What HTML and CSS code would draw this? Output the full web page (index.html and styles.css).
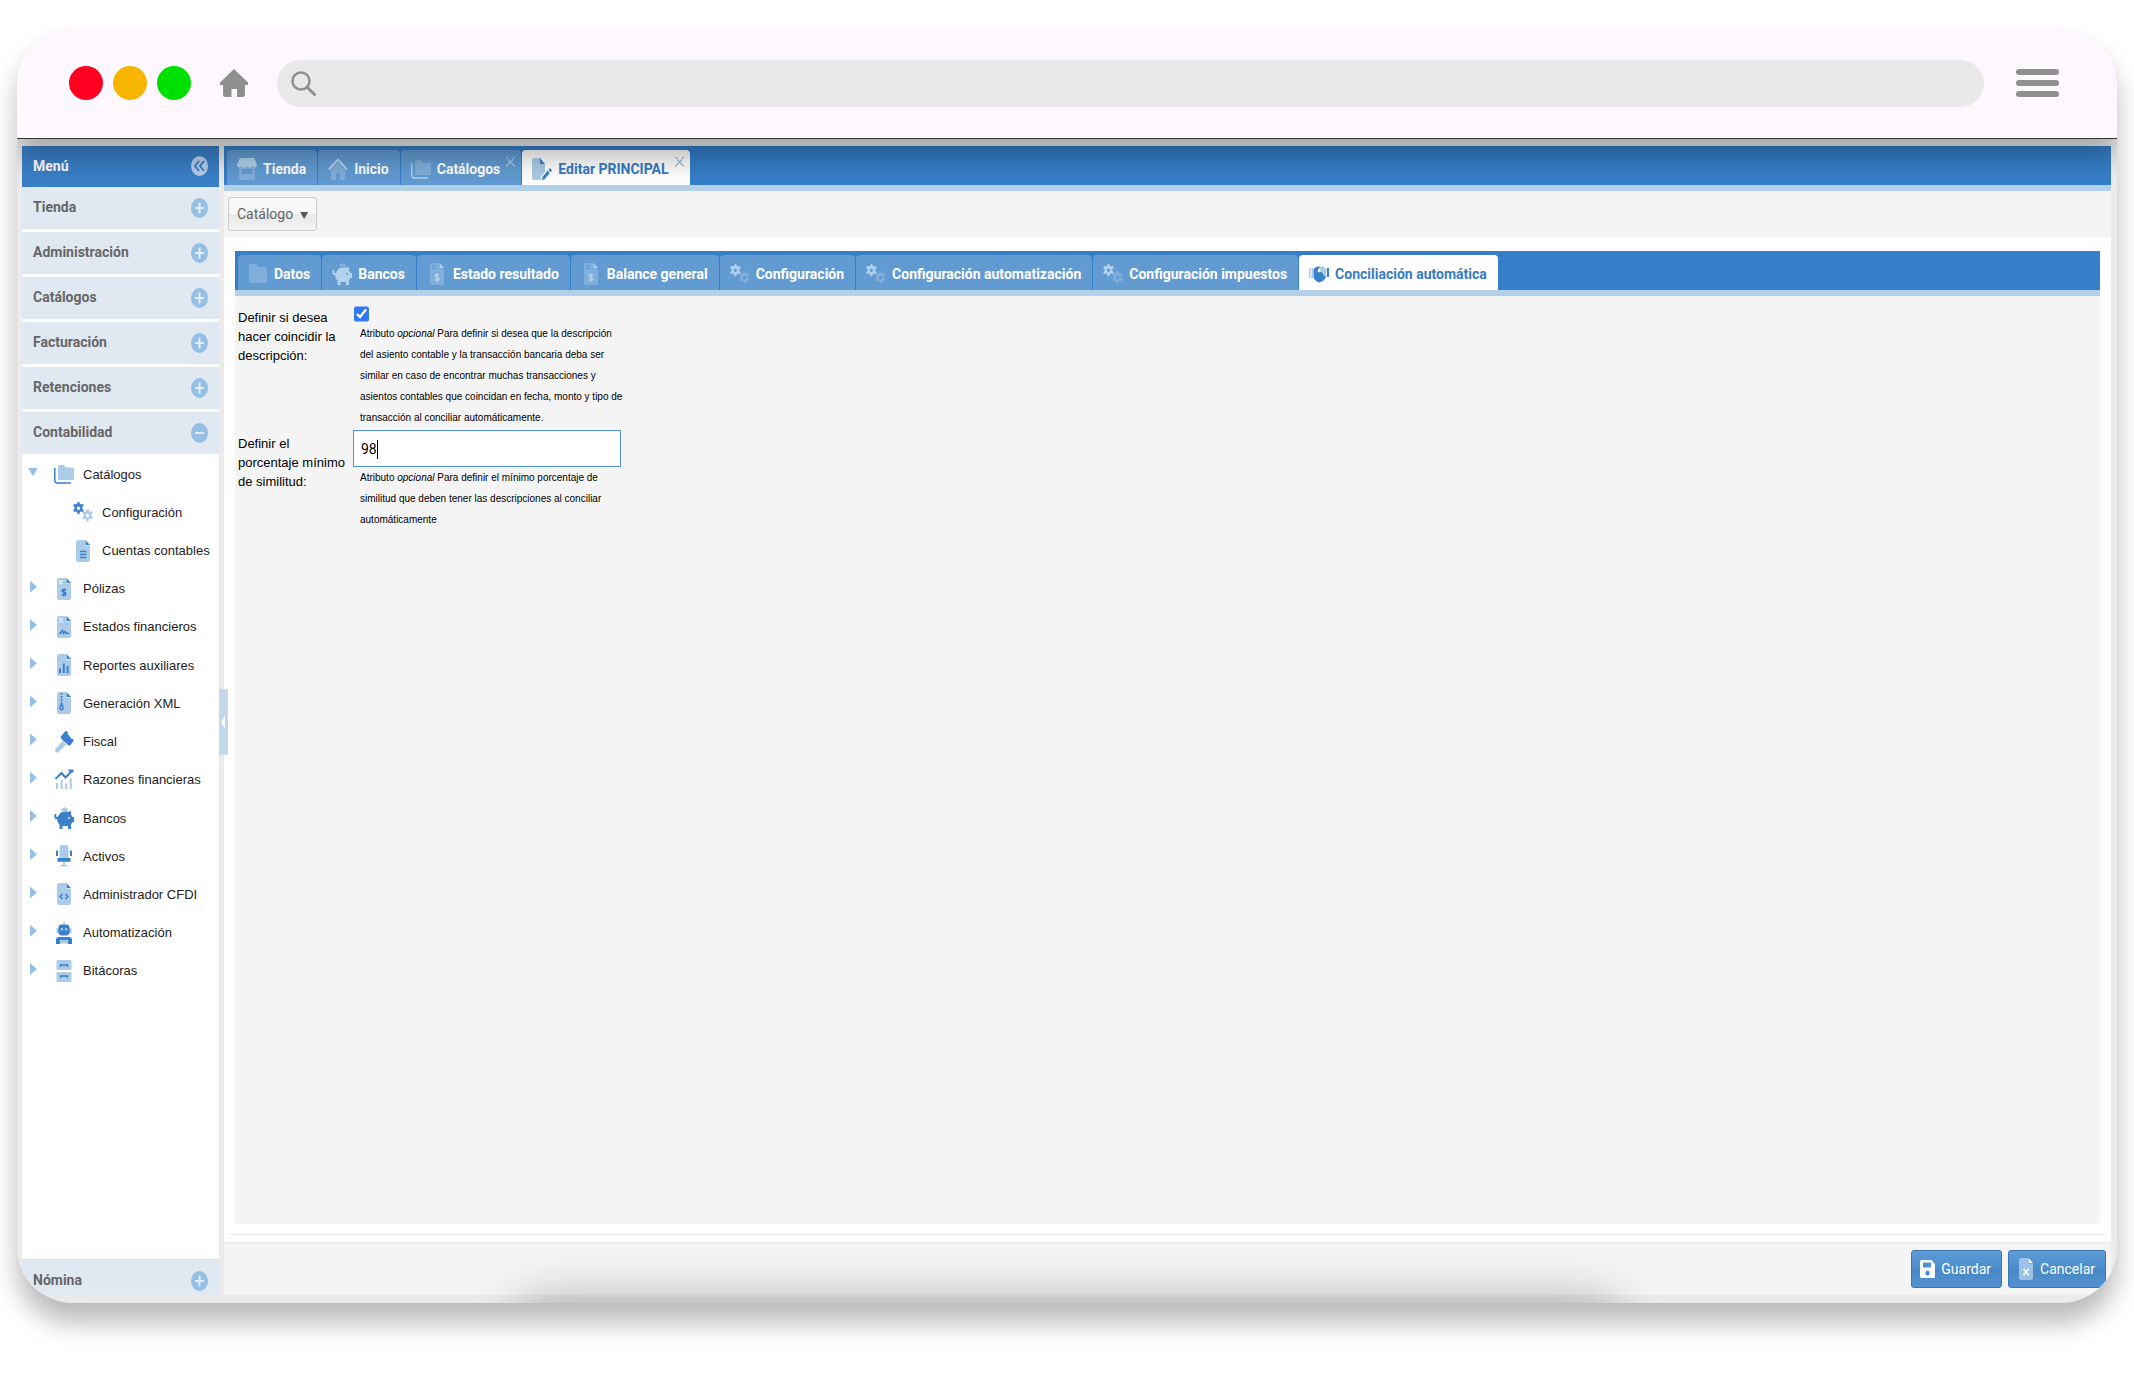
FILE: index.html
```html
<!DOCTYPE html>
<html lang="es">
<head>
<meta charset="utf-8">
<title>Editar PRINCIPAL</title>
<link rel="stylesheet" href="styles.css">
</head>
<body>
<svg class="sprite" aria-hidden="true">
  <symbol id="plus" viewBox="0 0 17 20"><ellipse class="b" cx="8.500" cy="10" rx="8.500" ry="10"/><path class="ln" d="M8.500 4.500v11M4 10h9"/></symbol>
  <symbol id="minus" viewBox="0 0 17 20"><ellipse class="b" cx="8.500" cy="10" rx="8.500" ry="10"/><path class="ln" d="M4 10h9"/></symbol>
  <symbol id="collapse" viewBox="0 0 17 20"><ellipse class="b" cx="8.500" cy="10" rx="8.500" ry="10"/><path class="ln" d="M8 5l-4 5 4 5M13 5l-4 5 4 5"/></symbol>
  <symbol id="folder" viewBox="0 0 20 22"><path class="b" d="M1 3a2 2 0 0 1 2-2h5l2 3h7a2 2 0 0 1 2 2v12a2 2 0 0 1-2 2H3a2 2 0 0 1-2-2z"/></symbol>
  <symbol id="folders" viewBox="0 0 20 22"><path class="b" d="M4 3.500A1.500 1.500 0 0 1 5.500 2H10l2 2.500h6.500A1.500 1.500 0 0 1 20 6v9.500a1.500 1.500 0 0 1-1.500 1.500h-13A1.500 1.500 0 0 1 4 15.500z"/><path class="al" d="M.8 5v12.500A2.500 2.500 0 0 0 3.500 20H17"/></symbol>
  <symbol id="cogs" viewBox="0 0 22 22"><path class="a" fill-rule="evenodd" d="M5 0h2l.5 2 1.300.7L10.800 2l1 2-1.500 1.500v2L11.800 9l-1 2-2-.6-1.300.7L7 13.500H5l-.5-2.400-1.300-.7-2 .6-1-2 1.500-1.500v-2L.2 4l1-2 2 .7L4.500 2zM6 5a1.800 2 0 1 0 0 4 1.800 2 0 0 0 0-4z"/><path class="b" fill-rule="evenodd" d="M15 8h2l.5 2 1.300.7 2-.7 1 2-1.500 1.500v2l1.500 1.500-1 2-2-.6-1.300.7-.5 2.400h-2l-.5-2.400-1.300-.7-2 .6-1-2 1.500-1.500v-2L10.200 12l1-2 2 .7 1.300-.7zm1 5a1.800 2 0 1 0 0 4 1.800 2 0 0 0 0-4z"/></symbol>
  <symbol id="sheet" viewBox="0 0 20 22"><path class="b" d="M5 0h7v5.500h5V20a2 2 0 0 1-2 2H5a2 2 0 0 1-2-2V2a2 2 0 0 1 2-2z"/><path class="a" d="M12.500 0l4.500 5h-4.500z"/></symbol>
  <symbol id="doc" viewBox="0 0 20 22"><use href="#sheet"/><path class="at" d="M7 11.500h6.500M7 14.500h6.500M7 17.500h6.500"/></symbol>
  <symbol id="doc-money" viewBox="0 0 20 22"><use href="#sheet"/><path class="ht" d="M5 3h4M5 5.500h4"/><path class="at" d="M12 12.200c-1-1-4-1-4 .6 0 1.800 4 1.200 4 3 0 1.700-3 1.700-4.200.6M10 10.500v8"/></symbol>
  <symbol id="doc-sign" viewBox="0 0 20 22"><use href="#sheet"/><path class="ht" d="M5 3h4M5 5.500h4"/><path class="at" d="M5.500 18l3-3.500 1 3 1.500-2 1 1.800h3"/></symbol>
  <symbol id="doc-bars" viewBox="0 0 20 22"><use href="#sheet"/><path class="am" d="M6 19v-4.500M9.800 19V9.500M13.600 19v-7"/></symbol>
  <symbol id="doc-zip" viewBox="0 0 20 22"><use href="#sheet"/><path class="at dash" d="M7.500 1v9"/><path class="at" d="M7.500 11l-1.500 4.500a1.600 1.600 0 1 0 3 0z"/></symbol>
  <symbol id="doc-code" viewBox="0 0 20 22"><use href="#sheet"/><path class="at" d="M8.500 11l-2.300 2.500 2.300 2.500M11.500 11l2.300 2.500-2.300 2.500"/></symbol>
  <symbol id="doc-x" viewBox="0 0 20 22"><use href="#sheet"/><path class="at" d="M7.500 11l5 6M12.500 11l-5 6"/></symbol>
  <symbol id="gavel" viewBox="0 0 20 22"><path class="b" d="M9 9.500l3 4L4.500 21.300c-1.500 1.500-4.600-1.300-3-3.300z"/><path class="a" d="M11.500 0l2.300.8-.3 1.700 4 5.500 1.800-.3.200 2.300-3.800 5-1.500-1L7.500 8 6.500 6z"/></symbol>
  <symbol id="trend" viewBox="0 0 20 22"><path class="am" d="M1.500 10L7.500 4l4 4.500L18 2M14.500 1.500h4v2"/><path class="bm" d="M3 20v-6M7.600 20V11M12.200 20v-5.500M16.800 20V9.500"/></symbol>
  <symbol id="pig" viewBox="0 0 20 22"><path class="b" d="M7 4c0-5 7-5 7 0z"/><path class="a" d="M5.500 7C7.500 4.500 11 4 14 5l3-1v3.500l1.500 2.500H20v5h-1.500L17 17.500V22h-3v-3H8.500v3h-3v-4.500C3.500 15.500 3 14 3.300 12 1 12.500-.5 9.500.5 7.500c1-1 2.500 0 1.800 1C1.500 9.500 3 10.800 4 9.500z"/><circle class="dot" cx="15" cy="11" r="1"/></symbol>
  <symbol id="chair" viewBox="0 0 20 22"><path class="b" d="M5.500 13V3a3 3 0 0 1 3-3h3a3 3 0 0 1 3 3v10zM9 16.500h2V20h2.500v1.500h-7V20H9z"/><path class="a" d="M2 5.500h2V11H2zM16 5.500h2V11h-2zM3.500 13h13v3.800h-13z"/></symbol>
  <symbol id="robot" viewBox="0 0 20 22"><path class="b" d="M9.300 0h1.500v3H9.300zM2.500 6h15v5h-15zM6 18h8v3.500H6z"/><path class="a" fill-rule="evenodd" d="M4.500 5.500a3 3 0 0 1 3-3h5a3 3 0 0 1 3 3V10a3.500 3.500 0 0 1-3.500 3.500H8A3.500 3.500 0 0 1 4.500 10zM7 6v2.500h2V6zm4 0v2.500h2V6zM2 22v-4a3 3 0 0 1 3-3h10a3 3 0 0 1 3 3v4h-4v-4H6v4z"/></symbol>
  <symbol id="cabinet" viewBox="0 0 20 22"><path class="b" d="M4 0h12a1.500 1.500 0 0 1 1.500 1.500V10h-15V1.500A1.500 1.500 0 0 1 4 0zM2.500 12h15v8.500A1.500 1.500 0 0 1 16 22H4a1.500 1.500 0 0 1-1.500-1.500z"/><path class="at" d="M6.500 7V5h7v2M6.500 18v-2h7v2"/></symbol>
  <symbol id="store" viewBox="0 0 20 22"><path class="b" d="M2 9h16v11a2 2 0 0 1-2 2H4a2 2 0 0 1-2-2zM5 11v5h10v-5z" fill-rule="evenodd"/><path class="a" d="M3 0h14l3 6.500C20 10 16.500 10 15.500 8c-1 2-4.500 2-5.500 0-1 2-4.500 2-5.500 0-1 2-4.500 2-4.500-1.500z"/></symbol>
  <symbol id="house" viewBox="0 0 20 22"><path class="b" d="M3 12l7-8 7 8v8a2 2 0 0 1-2 2h-3v-7H8v7H5a2 2 0 0 1-2-2z"/><path class="am" d="M1 11.500L10 1.500l9 10"/></symbol>
  <symbol id="edit" viewBox="0 0 20 22"><path class="b" d="M2 0h7v6h4v8l-4 5v3H2a2 2 0 0 1-2-2V2a2 2 0 0 1 2-2z"/><path class="a" d="M8 0l5 6H8zM18 10l2 2.500-1.500 1.700-2-2.500zM15.700 12.500l2 2.500-5.200 6.500-2.500.5.500-3z"/></symbol>
  <symbol id="hands" viewBox="0 0 20 22"><path class="b" d="M0 5h1.500v10H0zM2.500 5H4v10H2.500zM10 3.500h4L17 6v8l-5-5z"/><path class="a" d="M4.500 6L8 3.500h3L8.500 8l1 1.500 2.500-1 5 6-3 3.500-3.500 1.500-3-1-3-3.500zM17.800 5H20v9h-2.200z"/></symbol>
  <symbol id="save" viewBox="0 0 15 18"><path class="w" fill-rule="evenodd" d="M1.500 0h10L15 4v12.500a1.500 1.500 0 0 1-1.500 1.500h-12A1.500 1.500 0 0 1 0 16.500v-15A1.500 1.500 0 0 1 1.500 0zM3 2.500v5h8v-5zM7.500 10.500a2.200 2.500 0 1 0 0 5 2.200 2.500 0 0 0 0-5z"/></symbol>
</svg>

<div class="window">
  <header class="chrome">
    <span class="lights"><i class="light red"></i><i class="light amber"></i><i class="light green"></i></span>
    <a class="home" href="#" aria-label="Página de inicio"><svg viewBox="0 0 28 28"><path fill="#8f8f8f" d="M14 0L28 13.500V16h-3v10a2 2 0 0 1-2 2h-6v-8h-5.500v8H5a2 2 0 0 1-2-2V16H0v-2.500z"/></svg></a>
    <label class="search">
      <svg viewBox="0 0 25 25"><circle cx="10" cy="10" r="8.500" fill="none" stroke="#8f8f8f" stroke-width="2.500"/><path d="M16 16l7.500 7.500" stroke="#8f8f8f" stroke-width="3" stroke-linecap="round"/></svg>
      <input type="text" aria-label="Dirección">
    </label>
    <button class="burger" aria-label="Opciones"><i></i><i></i><i></i></button>
  </header>

  <div class="app">
    <nav class="side">
      <button class="side-head top">Menú<svg><use href="#collapse"/></svg></button>
      <button class="side-head">Tienda<svg><use href="#plus"/></svg></button>
      <button class="side-head">Administración<svg><use href="#plus"/></svg></button>
      <button class="side-head">Catálogos<svg><use href="#plus"/></svg></button>
      <button class="side-head">Facturación<svg><use href="#plus"/></svg></button>
      <button class="side-head">Retenciones<svg><use href="#plus"/></svg></button>
      <button class="side-head open">Contabilidad<svg><use href="#minus"/></svg></button>
      <ul class="tree">
        <li><i class="arrow down"></i><a href="#"><svg><use href="#folders"/></svg>Catálogos</a></li>
        <li class="child"><a href="#"><svg><use href="#cogs"/></svg>Configuración</a></li>
        <li class="child"><a href="#"><svg><use href="#doc"/></svg>Cuentas contables</a></li>
        <li><i class="arrow"></i><a href="#"><svg><use href="#doc-money"/></svg>Pólizas</a></li>
        <li><i class="arrow"></i><a href="#"><svg><use href="#doc-sign"/></svg>Estados financieros</a></li>
        <li><i class="arrow"></i><a href="#"><svg><use href="#doc-bars"/></svg>Reportes auxiliares</a></li>
        <li><i class="arrow"></i><a href="#"><svg><use href="#doc-zip"/></svg>Generación XML</a></li>
        <li><i class="arrow"></i><a href="#"><svg><use href="#gavel"/></svg>Fiscal</a></li>
        <li><i class="arrow"></i><a href="#"><svg><use href="#trend"/></svg>Razones financieras</a></li>
        <li><i class="arrow"></i><a href="#"><svg><use href="#pig"/></svg>Bancos</a></li>
        <li><i class="arrow"></i><a href="#"><svg><use href="#chair"/></svg>Activos</a></li>
        <li><i class="arrow"></i><a href="#"><svg><use href="#doc-code"/></svg>Administrador CFDI</a></li>
        <li><i class="arrow"></i><a href="#"><svg><use href="#robot"/></svg>Automatización</a></li>
        <li><i class="arrow"></i><a href="#"><svg><use href="#cabinet"/></svg>Bitácoras</a></li>
      </ul>
      <button class="side-head last">Nómina<svg><use href="#plus"/></svg></button>
      <button class="splitter" aria-label="Contraer menú"></button>
    </nav>

    <main class="main">
      <div class="tabs">
        <button class="tab"><svg><use href="#store"/></svg>Tienda</button>
        <button class="tab"><svg><use href="#house"/></svg>Inicio</button>
        <button class="tab"><svg><use href="#folders"/></svg>Catálogos<i class="close"></i></button>
        <button class="tab active"><svg><use href="#edit"/></svg>Editar PRINCIPAL<i class="close"></i></button>
      </div>
      <div class="toolbar"><button class="menu">Catálogo<i></i></button></div>
      <section class="content">
        <div class="tabs">
          <button class="tab"><svg><use href="#folder"/></svg>Datos</button>
          <button class="tab"><svg><use href="#pig"/></svg>Bancos</button>
          <button class="tab"><svg><use href="#doc-money"/></svg>Estado resultado</button>
          <button class="tab"><svg><use href="#doc-money"/></svg>Balance general</button>
          <button class="tab"><svg><use href="#cogs"/></svg>Configuración</button>
          <button class="tab"><svg><use href="#cogs"/></svg>Configuración automatización</button>
          <button class="tab"><svg><use href="#cogs"/></svg>Configuración impuestos</button>
          <button class="tab active"><svg><use href="#hands"/></svg>Conciliación automática</button>
        </div>
        <form class="panel">
          <label for="match">Definir si desea hacer coincidir la descripción:</label>
          <div class="field">
            <input type="checkbox" id="match" checked>
            <p>Atributo <em>opcional</em> Para definir si desea que la descripción<br>del asiento contable y la transacción bancaria deba ser<br>similar en caso de encontrar muchas transacciones y<br>asientos contables que coincidan en fecha, monto y tipo de<br>transacción al conciliar automáticamente.</p>
          </div>
          <label for="percent">Definir el porcentaje mínimo de similitud:</label>
          <div class="field">
            <input type="text" id="percent" value="98">
            <p>Atributo <em>opcional</em> Para definir el mínimo porcentaje de<br>similitud que deben tener las descripciones al conciliar<br>automáticamente</p>
          </div>
        </form>
        <hr>
      </section>
      <footer class="actions">
        <button class="btn"><svg class="disk"><use href="#save"/></svg>Guardar</button>
        <button class="btn"><svg><use href="#doc-x"/></svg>Cancelar</button>
      </footer>
    </main>
  </div>
</div>
</body>
</html>
```
FILE: styles.css
```css
* { box-sizing: border-box; }
body {
  margin: 0;
  padding: 28px 17px 72px;
  background: #fff;
  font: 14px/19px Roboto, "Liberation Sans", sans-serif;
  color: #222;
}
button, input { font: inherit; margin: 0; }
button { border: 0; padding: 0; background: none; }
a { color: inherit; text-decoration: none; }
svg { flex: none; width: 20px; height: 22px; --a: #3a80cb; --b: #accbe8; --h: #e4eef8; }
.sprite { position: absolute; width: 0; height: 0; }
.a { fill: var(--a); }
.b { fill: var(--b); }
.w { fill: #fff; }
.dot { fill: var(--h); }
.al, .at, .am, .bm, .ht, .ln { fill: none; stroke: var(--a); }
.al, .at, .ht { stroke-width: 1.5; }
.am, .bm, .ln { stroke-width: 2; }
.bm { stroke: var(--b); }
.ht, .ln { stroke: var(--h); }
.dash { stroke-dasharray: 2 1; }

.window {
  display: flex;
  flex-direction: column;
  min-height: calc(100vh - 100px);
  border-radius: 56px;
  overflow: hidden;
  background: #ebebeb;
  box-shadow: 0 20px 26px rgba(0, 0, 0, .27);
}
.chrome {
  position: relative;
  z-index: 2;
  display: flex;
  align-items: center;
  height: 111px;
  padding: 0 58px 0 52px;
  background: #fdf7ff;
  border-bottom: 1px solid #333;
  box-shadow: 0 20px 26px rgba(0, 0, 0, .27);
}
.lights { display: flex; gap: 10px; }
.light { width: 34px; height: 34px; border-radius: 50%; }
.red { background: #ff0020; }
.amber { background: #f8b500; }
.green { background: #00e000; }
.home { display: flex; margin: 0 29px; }
.home svg { width: 28px; height: 28px; }
.search {
  flex: 1;
  display: flex;
  align-items: center;
  gap: 12px;
  height: 47px;
  padding: 0 14px;
  border-radius: 24px;
  background: #e9e9e9;
}
.search svg { width: 25px; height: 25px; }
.search input { flex: 1; border: 0; background: none; outline: 0; }
.burger { display: flex; flex-direction: column; gap: 5px; width: 43px; margin-left: 32px; }
.burger i { height: 6px; border-radius: 3px; background: #8f8f8f; }

.app { flex: 1; display: flex; gap: 5px; padding: 7px 6px 8px 5px; position: relative; }
.app::after {
  content: "";
  position: absolute;
  left: 24%;
  right: 24%;
  bottom: -60px;
  height: 60px;
  box-shadow: 0 0 50px rgba(0, 0, 0, .32);
}
.side { position: relative; width: 197px; display: flex; flex-direction: column; background: #fff; }
.side-head {
  flex: none;
  display: flex;
  align-items: center;
  justify-content: space-between;
  height: 45px;
  padding: 0 11px 1px;
  border-bottom: 3px solid #fff;
  background: #e0e9f2;
  color: #666;
  font-weight: bold;
}
.side-head svg { width: 17px; height: 20px; --b: #95bfe4; }
.side-head.top { height: 41px; border: 0; background: #3a7fc8; color: #fff; }
.side-head.top svg { --b: #b5d0ea; --h: #3a7fc8; }
.side-head.open { height: 42px; border: 0; }
.side-head.last { height: 36px; border: 0; border-top: 1px solid #ddd; margin-top: auto; padding: 6px 11px 0; }
.tree {
  display: grid;
  grid-template-rows: repeat(14, 1fr);
  height: 535px;
  margin: 1px 0 0;
  padding: 0;
  list-style: none;
}
.tree, .panel > label { font: 13px/19px "Liberation Sans", sans-serif; }
.tree li { display: flex; align-items: center; padding-left: 8px; }
.tree a { display: flex; align-items: center; gap: 9px; white-space: nowrap; }
.tree .child { padding-left: 51px; }
.arrow {
  width: 7px;
  height: 12px;
  margin: 0 17px 4px 0;
  background: #95bfe4;
  clip-path: polygon(0 0, 100% 50%, 0 100%);
}
.arrow.down { width: 10px; height: 9px; margin: 0 16px 4px -2px; clip-path: polygon(0 0, 100% 0, 50% 100%); }
.splitter { position: absolute; right: -9px; top: 543px; width: 9px; height: 66px; background: #c2d8eb; z-index: 1; }
.splitter::after {
  content: "";
  position: absolute;
  left: 2px;
  top: 27px;
  width: 4px;
  height: 12px;
  background: #fff;
  clip-path: polygon(100% 0, 100% 100%, 0 50%);
}

.main { flex: 1; display: flex; flex-direction: column; background: #fff; }
.tabs {
  display: flex;
  gap: 1px;
  height: 45px;
  padding: 4px 3px 0;
  background: #357ec9;
  border-bottom: 6px solid #b3d0ea;
}
.tab {
  display: flex;
  align-items: center;
  gap: 6px;
  padding: 3px 11px 0 10px;
  border-radius: 4px 4px 0 0;
  background: #619bd2;
  color: #fff;
  font-weight: bold;
  white-space: nowrap;
}
.tab svg { --a: #b3d1ec; --b: #80afdc; --h: #619bd2; }
.tab.active { background: #fff; color: #357bc4; }
.tab.active svg { --a: #3a80cb; --b: #accbe8; }
.close {
  align-self: flex-start;
  width: 9px;
  height: 10px;
  margin: 4px -5px 0 0;
  background:
    linear-gradient(48deg, transparent 46%, #a3c4e2 46% 56%, transparent 56%),
    linear-gradient(-48deg, transparent 46%, #a3c4e2 46% 56%, transparent 56%);
}
.toolbar { height: 46px; padding: 6px 4px; background: #f4f4f4; }
.menu {
  display: flex;
  align-items: center;
  gap: 7px;
  height: 34px;
  padding: 0 8px;
  border: 1px solid #ccc;
  border-radius: 3px;
  background: linear-gradient(#f8f8f8 50%, #e9e9e9 50%, #f2f2f2);
  color: #666;
}
.menu i { width: 8px; height: 7px; margin-top: 3px; background: #555; clip-path: polygon(0 0, 100% 0, 50% 100%); }
.content { flex: 1; display: flex; flex-direction: column; padding: 14px 11px 7px; }
.panel {
  flex: 1;
  display: grid;
  grid-template-columns: 115px 268px;
  grid-template-rows: 126px auto;
  align-content: start;
  padding: 8px 3px;
  border-radius: 4px;
  background: #f4f4f4;
  color: #000;
}
.panel > label { padding: 4px 4px 0 0; }
.panel p {
  margin: 0;
  padding-left: 7px;
  font: 10px/21px "Liberation Sans", sans-serif;
  white-space: nowrap;
}
.panel input[type="checkbox"] { display: block; width: 15px; height: 18px; margin: 1px 0 0 1px; accent-color: #2f78f6; }
.panel input[type="text"] {
  display: block;
  width: 100%;
  height: 37px;
  border: 1px solid #4f92d3;
  padding: 0 7px;
  background: linear-gradient(#000, #000) 23px 9px / 1px 19px no-repeat #fff;
}
.content hr { width: auto; height: 1px; margin: 10px -6px 0; border: 0; background: #e8e8e8; }
.actions {
  display: flex;
  justify-content: flex-end;
  gap: 6px;
  height: 53px;
  padding: 7px 5px;
  border-top: 1px solid #e6e6e6;
  background: #f4f4f4;
}
.btn {
  display: flex;
  align-items: center;
  gap: 4px;
  height: 38px;
  padding: 0 10px 0 7px;
  border: 1px solid #3a76b3;
  border-radius: 3px;
  background: linear-gradient(#5d9bd4, #4b8ecf 50%, #4888c5 50%, #5292d2);
  color: #fff;
}
.btn svg { --a: #fff; --b: #9cc2e6; --h: #fff; }
.btn .disk { width: 15px; height: 18px; margin: 0 2px 0 1px; }
```
